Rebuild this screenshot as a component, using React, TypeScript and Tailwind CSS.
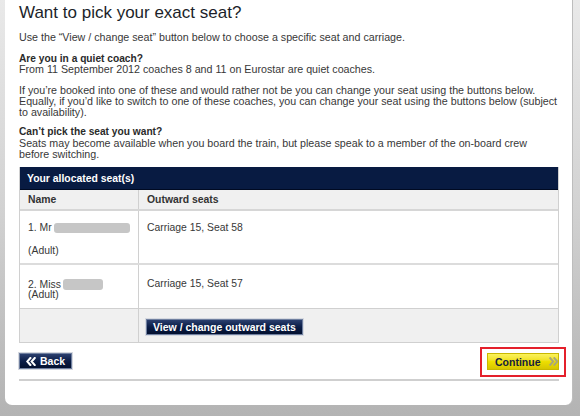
import React from 'react';

const font = { fontFamily: '"Liberation Sans", Arial, sans-serif' };

function Chevrons({ dir, className }: { dir: 'left' | 'right'; className?: string }) {
  const d =
    dir === 'left'
      ? 'M5 1 L1.5 5 L5 9 M10 1 L6.5 5 L10 9'
      : 'M1.5 1 L5 5 L1.5 9 M6.5 1 L10 5 L6.5 9';
  return (
    <svg viewBox="0 0 11.5 10" className={className} fill="none">
      <path d={d} stroke="currentColor" strokeWidth="2.4" strokeLinecap="square" />
    </svg>
  );
}

function NavyButton({ children }: { children: React.ReactNode }) {
  return (
    <button className="flex items-center whitespace-nowrap h-[16px] px-[6px] border border-[#6f7f9f] bg-gradient-to-b from-[#2b3f6e] via-[#0b1d47] to-[#03102f] text-white font-bold text-[10.5px] leading-none shadow-[0_0_0_1px_#d6d9e0]">
      {children}
    </button>
  );
}

export default function App() {
  return (
    <div
      className="w-[580px] h-[416px] bg-gradient-to-b from-[#e9e9e9] via-[#d2d2d2] to-[#b3b3b3] overflow-hidden"
      style={font}
    >
      <div className="ml-[5px] mr-[7px] h-[405px] bg-white rounded-b-[7px] border-r border-[#bdbdbd] pl-[14px] pr-[13px] pt-[3px] text-[#383838]">
        <h1 className="h-[20px] text-[17px] leading-[20px] text-[#1c1f2a]">Want to pick your exact seat?</h1>

        <div className="mt-[9px] text-[10.7px] leading-[10.7px] whitespace-nowrap">
          <p>Use the “View / change seat” button below to choose a specific seat and carriage.</p>
          <p className="mt-[10px]">
            <span className="font-bold text-[10.2px] text-[#2a2a2a]">Are you in a quiet coach?</span>
            <br />
            From 11 September 2012 coaches 8 and 11 on Eurostar are quiet coaches.
          </p>
          <p className="mt-[10px]">
            If you’re booked into one of these and would rather not be you can change your seat using the buttons below.
            <br />
            Equally, if you’d like to switch to one of these coaches, you can change your seat using the buttons below (subject
            <br />
            to availability).
          </p>
          <p className="mt-[9px]">
            <span className="font-bold text-[10.2px] text-[#2a2a2a]">Can’t pick the seat you want?</span>
            <br />
            Seats may become available when you board the train, but please speak to a member of the on-board crew
            <br />
            before switching.
          </p>
        </div>

        <div className="mt-[8px] w-[540px] border-x border-b border-[#d0d0d0] text-[10.4px] whitespace-nowrap">
          <div className="h-[23px] bg-[#081b42] border-b border-[#000a22] px-[7px] flex items-center text-white font-bold">
            Your allocated seat(s)
          </div>
          <div className="grid grid-cols-[119px_1fr] h-[21px] bg-[#f0f0f0] border-b-2 border-[#d6d6d6] font-bold text-[#333]">
            <div className="border-r border-[#d0d0d0] px-[8px] flex items-center">Name</div>
            <div className="px-[8px] flex items-center">Outward seats</div>
          </div>
          <div className="grid grid-cols-[119px_1fr] h-[54px] border-b-2 border-[#dcdcdc] leading-[11px]">
            <div className="border-r border-[#d0d0d0] px-[8px] pt-[11px]">
              <div className="flex items-center">
                <span>1. Mr</span>
                <span className="ml-[2px] inline-block w-[87px] h-[10px] rounded-[3px] bg-[#c6c6c6] blur-[0.6px]" />
              </div>
              <div className="mt-[12px]">(Adult)</div>
            </div>
            <div className="px-[8px] pt-[11px]">Carriage 15, Seat 58</div>
          </div>
          <div className="grid grid-cols-[119px_1fr] h-[44px] border-b border-[#d0d0d0] leading-[10.5px]">
            <div className="border-r border-[#d0d0d0] px-[8px] pt-[14px]">
              <div className="flex items-center">
                <span>2. Miss</span>
                <span className="ml-[2px] inline-block w-[40px] h-[11px] rounded-[3px] bg-[#c6c6c6] blur-[0.6px]" />
              </div>
              <div>(Adult)</div>
            </div>
            <div className="px-[8px] pt-[14px]">Carriage 15, Seat 57</div>
          </div>
          <div className="grid grid-cols-[119px_1fr] h-[33px] bg-[#f0f0f0]">
            <div className="border-r border-[#d0d0d0]" />
            <div className="px-[7px] pt-[10px]">
              <NavyButton>View / change outward seats</NavyButton>
            </div>
          </div>
        </div>

        <div className="mt-[10px] w-[540px] flex justify-between items-start">
          <NavyButton>
            <Chevrons dir="left" className="w-[10px] h-[9px] mr-[4px]" />
            Back
          </NavyButton>
          <div className="relative">
            <div className="absolute -left-[7px] -right-[7px] -top-[6px] -bottom-[7px] border-2 border-[#e4202b]" />
            <button className="flex items-center whitespace-nowrap h-[17px] w-[72px] pl-[7px] border border-[#c9b800] bg-gradient-to-b from-[#fbf25a] via-[#eedf00] to-[#d6c600] text-[#14203f] font-bold text-[10.5px] leading-none">
              Continue
              <Chevrons dir="right" className="w-[10px] h-[9px] ml-[8px] text-[#a8a67a]" />
            </button>
          </div>
        </div>

        <div className="mt-[9px] w-[540px] h-[2px] bg-[#cfcfcf]" />
      </div>
    </div>
  );
}
